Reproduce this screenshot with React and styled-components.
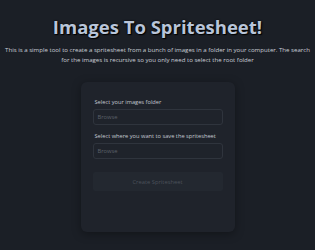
import React from "react";
import styled, { createGlobalStyle } from "styled-components";

const Global = createGlobalStyle`
  html, body { margin: 0; padding: 0; background: #1b1f26; }
  body { font-family: "Open Sans", "Noto Sans", sans-serif; }
`;

const Page = styled.div`
  width: 315px;
  height: 250px;
  background: #1b1f26;
  display: flex;
  flex-direction: column;
  align-items: center;
  overflow: hidden;
`;

const Title = styled.h1`
  margin: 16px 0 0;
  font-size: 18.5px;
  line-height: 22px;
  font-weight: 700;
  color: #b9c5d9;
  text-shadow: 0 0 2px #000, 1px 1px 1px #000;
`;

const Desc = styled.p`
  margin: 7px 0 0;
  padding: 0 4px;
  font-size: 6.1px;
  line-height: 10px;
  color: #c9ced6;
  text-align: center;
`;

const Card = styled.div`
  margin-top: 17px;
  width: 154px;
  height: 150px;
  box-sizing: border-box;
  padding: 16px 12px;
  background: #1f232b;
  border-radius: 6px;
  box-shadow: 0 2px 10px rgba(0, 0, 0, 0.35);
  display: flex;
  flex-direction: column;
`;

const Label = styled.label`
  font-size: 5.7px;
  line-height: 8px;
  color: #c2c7cf;
  margin: 0 0 3px 2px;
  white-space: nowrap;
`;

const Input = styled.div`
  height: 16px;
  box-sizing: border-box;
  border: 1px solid #2f343d;
  border-radius: 3px;
  padding: 0 4px;
  display: flex;
  align-items: center;
  font-size: 5.8px;
  color: #5c616a;
  margin-bottom: ${(p) => p.$mb || 0}px;
`;

const Button = styled.div`
  height: 19px;
  background: #232830;
  border-radius: 2px;
  display: flex;
  align-items: center;
  justify-content: center;
  font-size: 5.8px;
  color: #4c525b;
`;

export default function App() {
  return (
    <>
      <Global />
      <Page>
        <Title>Images To Spritesheet!</Title>
        <Desc>
          This is a simple tool to create a spritesheet from a bunch of images in a folder in your computer. The search for the images is recursive so you only need to select the root folder
        </Desc>
        <Card>
          <Label>Select your images folder</Label>
          <Input $mb={7}>Browse</Input>
          <Label>Select where you want to save the spritesheet</Label>
          <Input $mb={13}>Browse</Input>
          <Button>Create Spritesheet</Button>
        </Card>
      </Page>
    </>
  );
}
